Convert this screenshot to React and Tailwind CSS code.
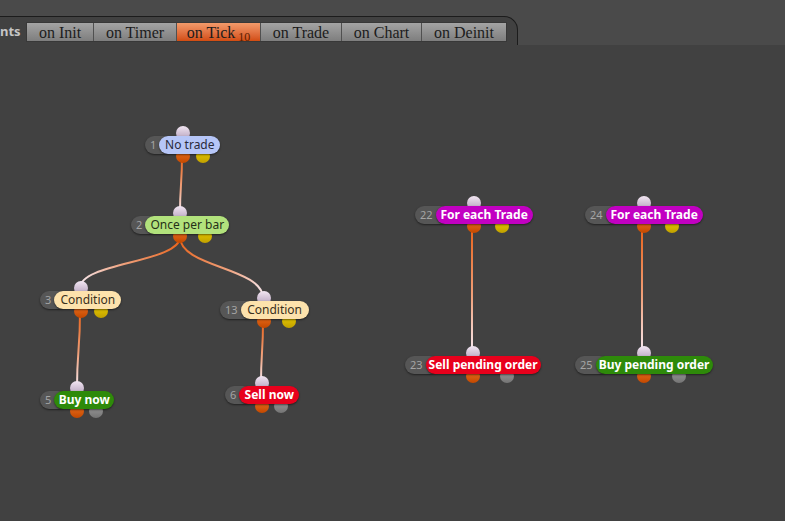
import React from 'react';

const tabs = [
  { name: 'on Init', w: 67 },
  { name: 'on Timer', w: 83 },
  { name: 'on Tick', w: 84, active: true, badge: '10' },
  { name: 'on Trade', w: 81 },
  { name: 'on Chart', w: 80 },
  { name: 'on Deinit', w: 84 },
];

// page coords: x = left of number pill, y = top of label
const nodes = [
  { n: '1', label: 'No trade', x: 145, y: 136, w: 61, kind: 'blue', second: 'yellow', off: 20 },
  { n: '2', label: 'Once per bar', x: 131, y: 216, w: 84, kind: 'lime', second: 'yellow', off: 25 },
  { n: '3', label: 'Condition', x: 40, y: 291, w: 67, kind: 'beige', second: 'yellow', off: 20 },
  { n: '13', label: 'Condition', x: 220, y: 301, w: 68, kind: 'beige', second: 'yellow', off: 25 },
  { n: '5', label: 'Buy now', x: 40, y: 391, w: 60, kind: 'green', second: 'gray', off: 19 },
  { n: '6', label: 'Sell now', x: 225, y: 386, w: 60, kind: 'red', second: 'gray', off: 19 },
  { n: '22', label: 'For each Trade', x: 415, y: 206, w: 97, kind: 'magenta', second: 'yellow', off: 28 },
  { n: '24', label: 'For each Trade', x: 585, y: 206, w: 97, kind: 'magenta', second: 'yellow', off: 28 },
  { n: '23', label: 'Sell pending order', x: 405, y: 356, w: 115, kind: 'red', second: 'gray', off: 34 },
  { n: '25', label: 'Buy pending order', x: 575, y: 356, w: 117, kind: 'green', second: 'gray', off: 35 },
];

const labelStyles = {
  blue: 'bg-[#b6c6f8] text-[#2a2a3a]',
  lime: 'bg-[#b2e27c] text-[#263018]',
  beige: 'bg-[#fde2ac] text-[#3a3020]',
  green: 'bg-[#2e8a0a] text-white font-bold',
  red: 'bg-[#e8001c] text-white font-bold',
  magenta: 'bg-[#c200c2] text-white font-bold',
};

const edges = [
  [182, 156, 180, 213],
  [180, 237, 80, 288],
  [180, 237, 263, 298],
  [80, 312, 77, 388],
  [263, 322, 261, 383],
  [472, 227, 472, 353],
  [642, 227, 642, 353],
];

function Node({ node }) {
  const secondCls =
    node.second === 'yellow'
      ? 'bg-gradient-to-b from-[#f2d400] to-[#c0a000]'
      : 'bg-gradient-to-b from-[#a0a0a0] to-[#747474]';
  return (
    <div className="absolute" style={{ left: node.x, top: node.y }}>
      <div className="relative flex items-center h-[18px]">
        {/* input pin */}
        <div className="absolute left-1/2 -translate-x-1/2 -top-[10px] w-[14px] h-[14px] rounded-full bg-gradient-to-b from-[#f2e6f2] to-[#b4a0bc]" />
        {/* output pins */}
        <div className="absolute left-1/2 -translate-x-1/2 top-[13px] w-[14px] h-[14px] rounded-full bg-gradient-to-b from-[#f27420] to-[#c24800]" />
        <div
          className={`absolute -translate-x-1/2 top-[13px] w-[14px] h-[14px] rounded-full ${secondCls}`}
          style={{ left: `calc(50% + ${node.off}px)` }}
        />
        <div className="relative z-10 h-[18px] rounded-full bg-[#565656] pl-[5px] pr-[16px] flex items-center text-[11px] text-[#a4a4a4] shadow-[0_1px_2px_rgba(0,0,0,0.5)]">
          {node.n}
        </div>
        <div
          className={`relative z-10 -ml-[13px] h-[18px] rounded-full flex items-center justify-center text-[12px] leading-none whitespace-nowrap shadow-[0_1px_2px_rgba(0,0,0,0.5)] ${labelStyles[node.kind]}`}
          style={{ width: node.w }}
        >
          {node.label}
        </div>
      </div>
    </div>
  );
}

function App() {
  return (
    <div className="relative w-[785px] h-[521px] overflow-hidden bg-[#414141] font-['Noto_Sans',sans-serif]">
      <div className="h-[16px] bg-[#4a4a4a]" />
      <div className="flex h-[29px] bg-[#4a4a4a]">
        <div className="w-[518px] border-t border-r border-[#1c1c1c] rounded-tr-[14px] bg-[#414141] flex items-start pt-[5px]">
          <span className="w-[26px] pt-[1px] text-[13px] font-bold text-[#c6c6c6] leading-[17px]">nts</span>
          <div className="flex border border-[#383838]">
            {tabs.map((t) => (
              <div
                key={t.name}
                className={`h-[18px] flex items-end justify-center border-r border-[#505050] last:border-r-0 font-['Liberation_Serif',serif] text-[16px] leading-[17px] text-[#1c1c1c] ${
                  t.active
                    ? 'bg-gradient-to-b from-[#f29a6a] to-[#d24c10]'
                    : 'bg-gradient-to-b from-[#a4a4a4] to-[#7e7e7e]'
                }`}
                style={{ width: t.w }}
              >
                <span>{t.name}</span>
                {t.badge && (
                  <span className="ml-[3px] translate-y-[2px] text-[12px] leading-[12px] text-[#5a1c00]">{t.badge}</span>
                )}
              </div>
            ))}
          </div>
        </div>
        <div className="flex-1" />
      </div>

      <svg className="absolute inset-0" width="785" height="521">
        <defs>
          {edges.map(([x1, y1, x2, y2], i) => (
            <linearGradient key={i} id={`g${i}`} gradientUnits="userSpaceOnUse" x1={x1} y1={y1} x2={x2} y2={y2}>
              <stop offset="0" stopColor="#e8621a" />
              <stop offset="0.55" stopColor="#f0a07a" />
              <stop offset="1" stopColor="#f6eaf2" />
            </linearGradient>
          ))}
        </defs>
        {edges.map(([x1, y1, x2, y2], i) => {
          const d = Math.abs(y2 - y1) * 0.5;
          return (
            <path
              key={i}
              d={`M${x1} ${y1} C${x1} ${y1 + d} ${x2} ${y2 - d} ${x2} ${y2}`}
              fill="none"
              stroke={`url(#g${i})`}
              strokeWidth="2"
            />
          );
        })}
      </svg>

      {nodes.map((n) => (
        <Node key={n.n} node={n} />
      ))}
    </div>
  );
}

export default App;
